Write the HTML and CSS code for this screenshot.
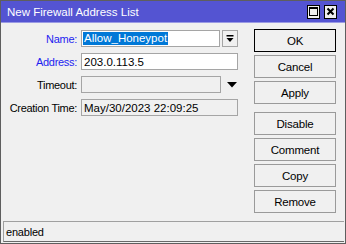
FILE: index.html
```html
<!DOCTYPE html>
<html>
<head>
<meta charset="utf-8">
<link rel="stylesheet" href="styles.css">
</head>
<body>
<div class="window">
  <div class="titlebar">
    <span class="title">New Firewall Address List</span>
    <div class="tbtns">
      <span class="tbtn"><svg width="11" height="11" viewBox="0 0 11 11"><rect x="1.5" y="1.5" width="8" height="8" fill="none" stroke="#000" stroke-width="1"/><rect x="1" y="1" width="9" height="2" fill="#000"/></svg></span>
      <span class="tbtn"><svg width="11" height="11" viewBox="0 0 11 11"><path d="M2.5 2.5 L8.5 8.5 M8.5 2.5 L2.5 8.5" stroke="#000" stroke-width="2"/></svg></span>
    </div>
  </div>
  <div class="main">
    <div class="form">
      <div class="row">
        <span class="label req">Name:</span>
        <span class="field f-name"><span class="sel">Allow_Honeypot</span></span>
        <span class="ddbtn"><svg width="8" height="8" viewBox="0 0 8 8"><rect x="0.5" y="0" width="7" height="1.5" fill="#000"/><polygon points="0.5,3 7.5,3 4,7" fill="#000"/></svg></span>
      </div>
      <div class="row">
        <span class="label req">Address:</span>
        <span class="field f-wide">203.0.113.5</span>
      </div>
      <div class="row">
        <span class="label">Timeout:</span>
        <span class="field f-timeout disabled"></span>
        <span class="arrow"><svg width="10" height="6" viewBox="0 0 10 6"><polygon points="0,0 10,0 5,5.5" fill="#000"/></svg></span>
      </div>
      <div class="row">
        <span class="label">Creation Time:</span>
        <span class="field f-wide disabled">May/30/2023 22:09:25</span>
      </div>
    </div>
    <div class="buttons">
      <button class="btn default">OK</button>
      <button class="btn">Cancel</button>
      <button class="btn">Apply</button>
      <button class="btn sep">Disable</button>
      <button class="btn">Comment</button>
      <button class="btn">Copy</button>
      <button class="btn">Remove</button>
    </div>
  </div>
  <div class="status"><span class="stext">enabled</span></div>
</div>
</body>
</html>
```
FILE: styles.css
```css
html, body {
  margin: 0;
  padding: 0;
  background: #ffffff;
}
body {
  font-family: "Liberation Sans", Arial, sans-serif;
  font-size: 11px;
  color: #000;
}
.window {
  width: 346px;
  height: 244px;
  box-sizing: border-box;
  border: 1px solid #5e5e5e;
  background: #f0f0f0;
  display: flex;
  flex-direction: column;
}
.titlebar {
  height: 21px;
  background: #5454d2;
  display: flex;
  align-items: center;
  padding: 0 8px 0 6px;
  border-bottom: 1px solid #9a9ae4;
}
.title {
  color: #fff;
  font-size: 11.5px;
  flex: 1;
}
.tbtns {
  display: flex;
  gap: 4px;
}
.tbtn {
  width: 11px;
  height: 12px;
  border: 1px solid #000;
  background: #f0f0f0;
  display: flex;
  align-items: center;
  justify-content: center;
}
.main {
  flex: 1;
  display: flex;
  padding: 6px 9px 0 0;
}
.form {
  padding-top: 1px;
  display: flex;
  flex-direction: column;
  gap: 6px;
}
.row {
  display: flex;
  align-items: center;
  height: 17px;
}
.label {
  width: 76px;
  text-align: right;
  margin-right: 4px;
  letter-spacing: -0.3px;
  white-space: nowrap;
}
.label.req {
  color: #1e1ef0;
}
.field {
  height: 17px;
  box-sizing: border-box;
  border: 1px solid #a5a5a5;
  background: #fff;
  padding: 0 2px;
  display: flex;
  align-items: center;
  white-space: nowrap;
  font-size: 11.5px;
}
.field.disabled {
  background: #f0f0f0;
}
.f-name {
  width: 139px;
  padding-left: 1px;
}
.f-wide {
  width: 157px;
}
.f-timeout {
  width: 140px;
}
.sel {
  background: #0078d7;
  color: #fff;
  padding: 0 1px;
  line-height: 13px;
}
.ddbtn {
  width: 16px;
  height: 17px;
  box-sizing: border-box;
  margin-left: 2px;
  border: 1px solid #a5a5a5;
  background: #f0f0f0;
  display: flex;
  align-items: center;
  justify-content: center;
}
.arrow {
  margin-left: 6px;
  display: flex;
  align-items: center;
}
.buttons {
  margin-left: auto;
  width: 82px;
  display: flex;
  flex-direction: column;
  gap: 3px;
}
.btn {
  height: 23px;
  box-sizing: border-box;
  border: 1px solid #9a9a9a;
  background: #f0f0f0;
  font-family: "Liberation Sans", Arial, sans-serif;
  font-size: 11.5px;
  letter-spacing: -0.2px;
  color: #000;
  padding: 0;
}
.btn.default {
  border: 1px solid #000;
}
.btn.sep {
  margin-top: 5px;
}
.status {
  margin: 0 1px 1px 2px;
  height: 21px;
  box-sizing: border-box;
  border-top: 1px solid #a0a0a0;
  border-left: 1px solid #a0a0a0;
  border-bottom: 1px solid #696969;
  display: flex;
  align-items: center;
  padding-left: 2px;
}
.stext {
  letter-spacing: -0.2px;
}
```
